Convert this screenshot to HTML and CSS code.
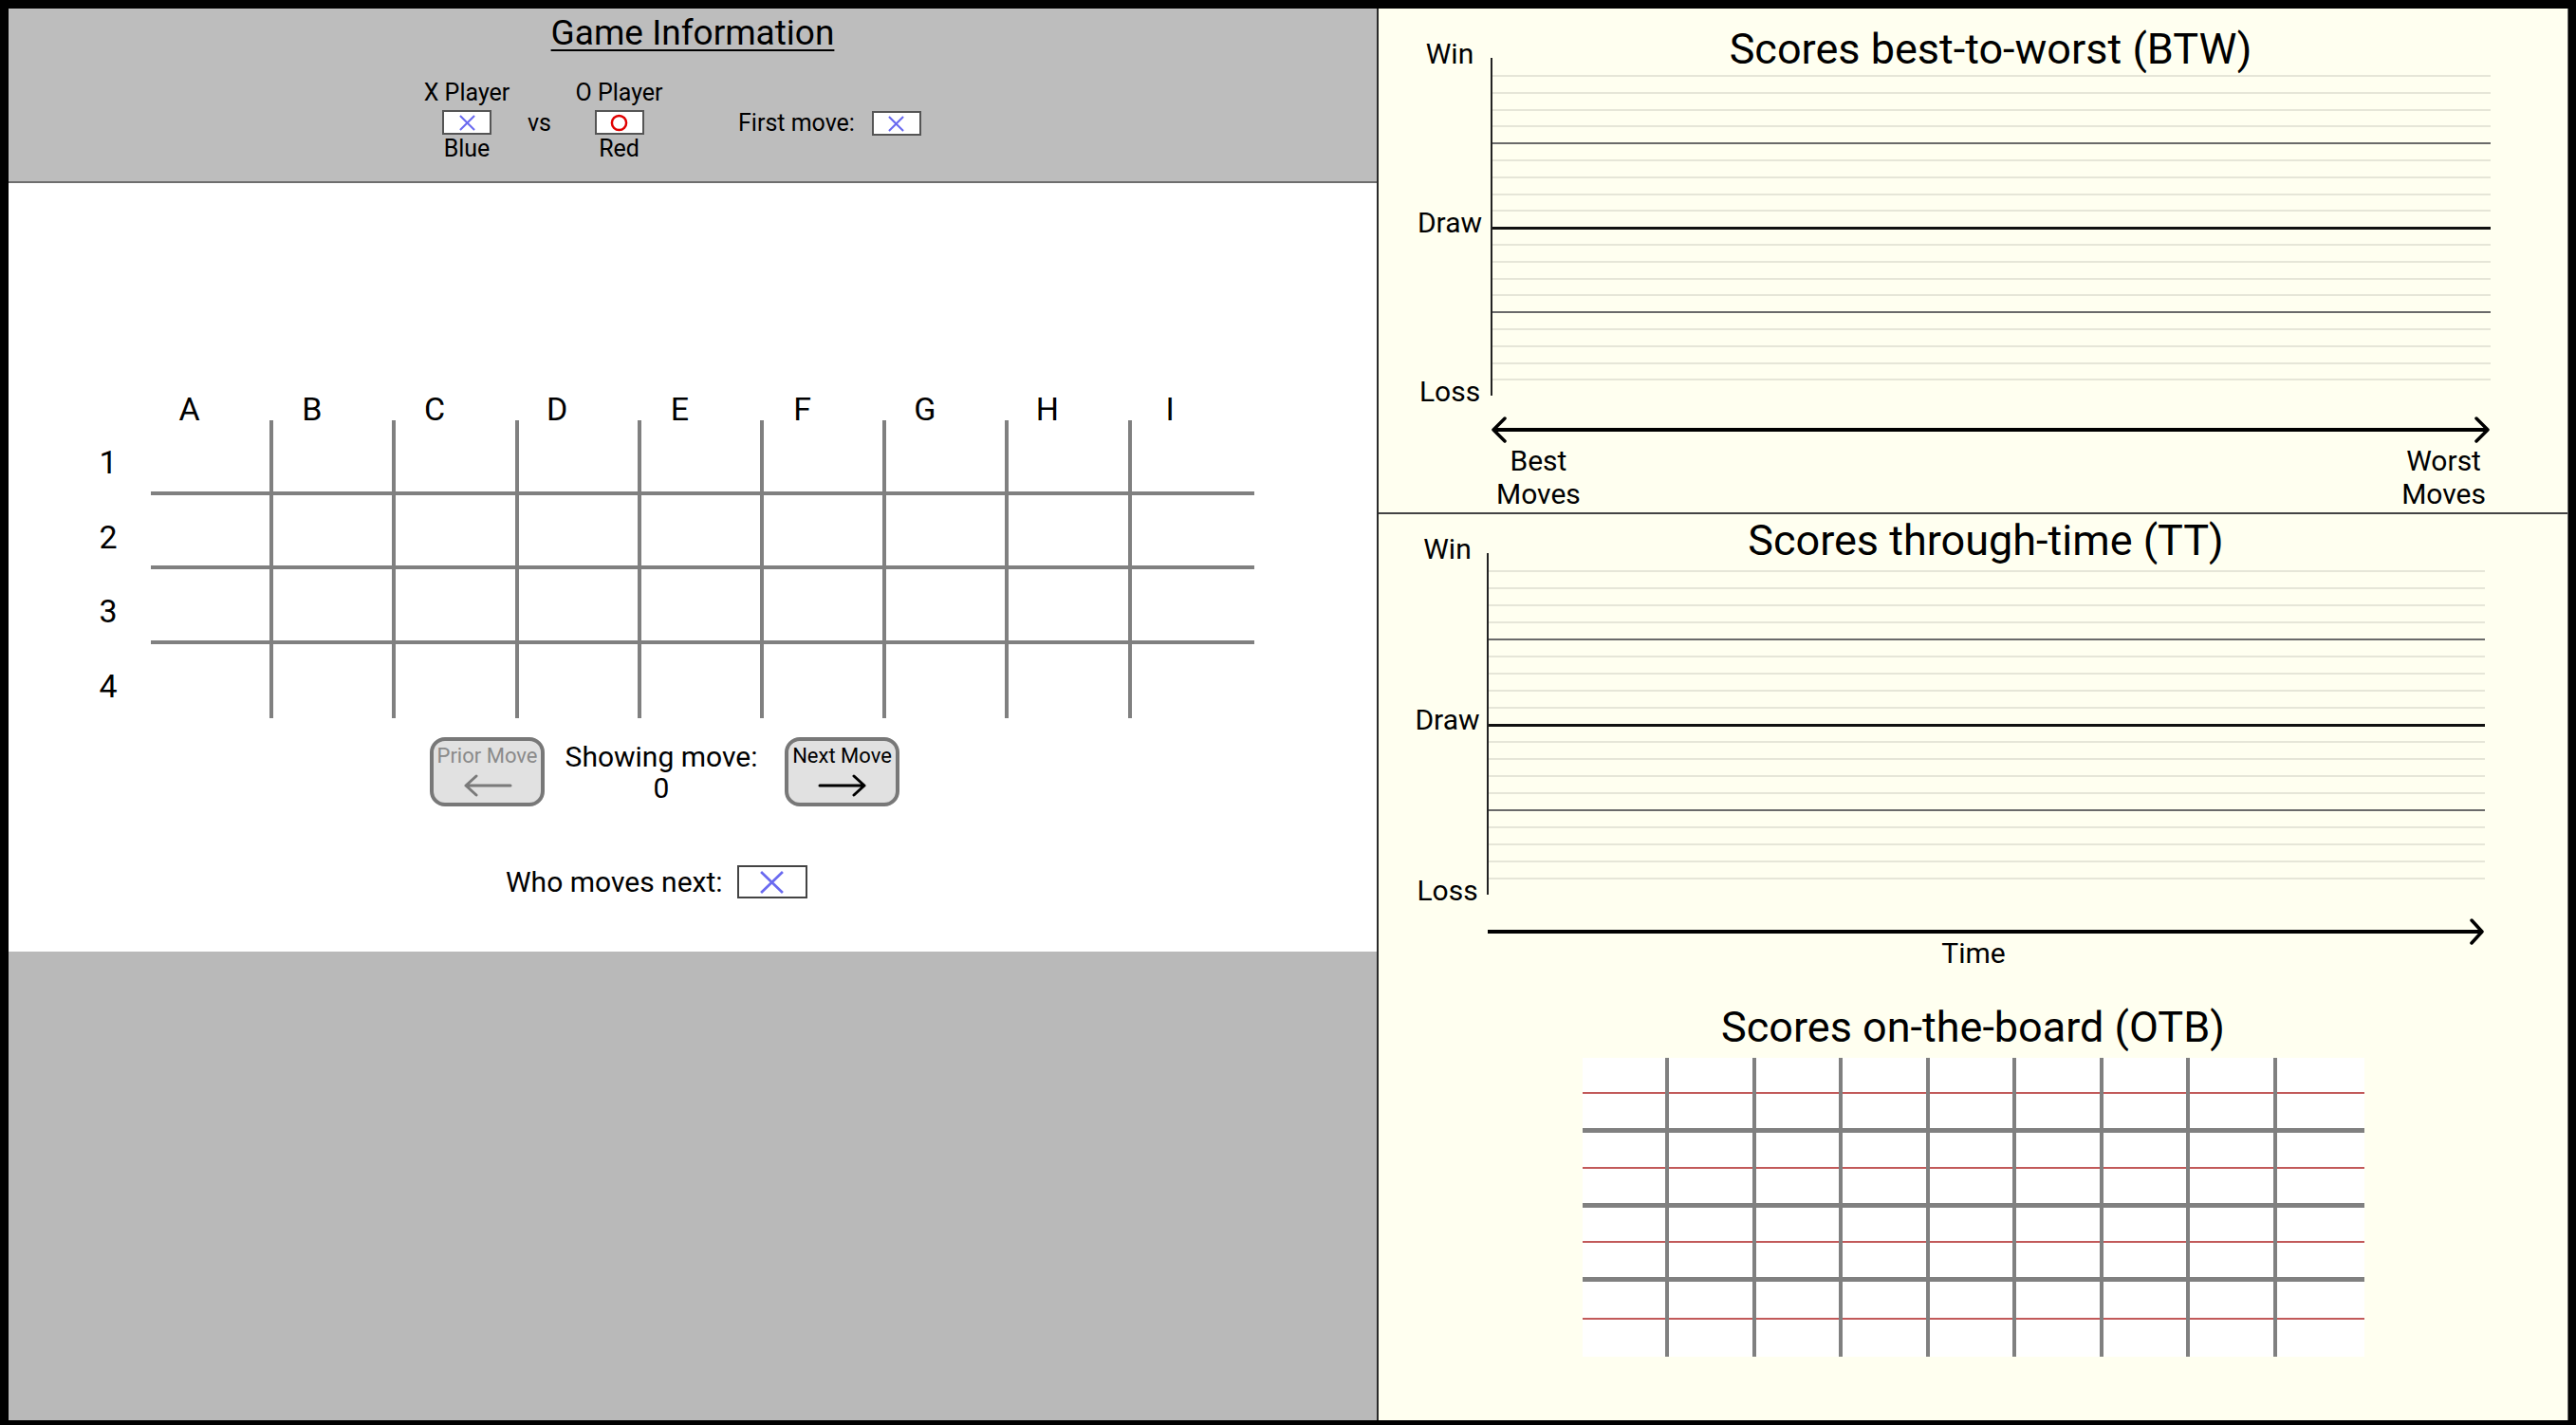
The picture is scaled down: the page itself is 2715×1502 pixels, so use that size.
FILE: index.html
```html
<!DOCTYPE html>
<html lang="en">
<head>
<meta charset="utf-8">
<title>Game Information</title>
<link rel="stylesheet" href="styles.css">
</head>
<body>
<div class="app">
  <section class="left">
    <header class="info">
      <h1 class="info-title">Game Information</h1>
      <div class="players">
        <div class="player player-x">
          <span>X Player</span>
          <span class="mark-box"><svg class="xmark" viewBox="0 0 20 18"><path d="M2 1 L18 17 M18 1 L2 17"/></svg></span>
          <span>Blue</span>
        </div>
        <span class="vs">vs</span>
        <div class="player player-o">
          <span>O Player</span>
          <span class="mark-box"><svg class="omark" viewBox="0 0 20 20"><circle cx="10" cy="10" r="8"/></svg></span>
          <span>Red</span>
        </div>
        <div class="first-move">
          <span>First move:</span>
          <span class="mark-box"><svg class="xmark" viewBox="0 0 20 18"><path d="M2 1 L18 17 M18 1 L2 17"/></svg></span>
        </div>
      </div>
    </header>

    <div class="board-area">
      <div class="board">
        <div></div>
        <div class="col-label">A</div><div class="col-label">B</div><div class="col-label">C</div>
        <div class="col-label">D</div><div class="col-label">E</div><div class="col-label">F</div>
        <div class="col-label">G</div><div class="col-label">H</div><div class="col-label">I</div>

        <div class="row-label">1</div>
        <div class="cell"></div><div class="cell"></div><div class="cell"></div><div class="cell"></div><div class="cell"></div><div class="cell"></div><div class="cell"></div><div class="cell"></div><div class="cell"></div>
        <div class="row-label">2</div>
        <div class="cell"></div><div class="cell"></div><div class="cell"></div><div class="cell"></div><div class="cell"></div><div class="cell"></div><div class="cell"></div><div class="cell"></div><div class="cell"></div>
        <div class="row-label">3</div>
        <div class="cell"></div><div class="cell"></div><div class="cell"></div><div class="cell"></div><div class="cell"></div><div class="cell"></div><div class="cell"></div><div class="cell"></div><div class="cell"></div>
        <div class="row-label">4</div>
        <div class="cell"></div><div class="cell"></div><div class="cell"></div><div class="cell"></div><div class="cell"></div><div class="cell"></div><div class="cell"></div><div class="cell"></div><div class="cell"></div>
      </div>

      <div class="controls">
        <button class="btn btn-prior" type="button">
          <span>Prior Move</span>
          <svg class="btn-arrow" viewBox="0 0 52 24"><path d="M50 12 H3 M14 2 L3 12 L14 22"/></svg>
        </button>
        <div class="showing">
          <div>Showing move:</div>
          <div>0</div>
        </div>
        <button class="btn btn-next" type="button">
          <span>Next Move</span>
          <svg class="btn-arrow" viewBox="0 0 52 24"><path d="M2 12 H49 M38 2 L49 12 L38 22"/></svg>
        </button>
      </div>

      <div class="who">
        <span>Who moves next:</span>
        <span class="who-box"><svg class="xmark xmark-lg" viewBox="0 0 26 23"><path d="M2 1 L24 22 M24 1 L2 22"/></svg></span>
      </div>
    </div>

    <div class="left-fill"></div>
  </section>

  <section class="right">
    <div class="chart chart-btw">
      <h2 class="chart-title">Scores best-to-worst (BTW)</h2>
      <div class="ylabels"><span>Win</span><span>Draw</span><span>Loss</span></div>
      <div class="plot">
        <div class="band"></div><div class="band"></div><div class="band"></div><div class="band"></div><div class="band"></div>
        <div class="band"></div><div class="band"></div><div class="band"></div><div class="band"></div><div class="band"></div>
        <div class="band"></div><div class="band"></div><div class="band"></div><div class="band"></div><div class="band"></div>
        <div class="band"></div><div class="band"></div><div class="band"></div><div class="band"></div><div class="band"></div>
      </div>
      <svg class="xaxis" viewBox="0 0 1054 30"><path d="M3 15 H1051"/><path class="head" d="M15 3 L3 15 L15 27 M1039 3 L1051 15 L1039 27"/></svg>
      <div class="xcaptions">
        <div>Best<br>Moves</div>
        <div>Worst<br>Moves</div>
      </div>
    </div>

    <div class="chart chart-tt">
      <h2 class="chart-title">Scores through-time (TT)</h2>
      <div class="ylabels"><span>Win</span><span>Draw</span><span>Loss</span></div>
      <div class="plot">
        <div class="band"></div><div class="band"></div><div class="band"></div><div class="band"></div><div class="band"></div>
        <div class="band"></div><div class="band"></div><div class="band"></div><div class="band"></div><div class="band"></div>
        <div class="band"></div><div class="band"></div><div class="band"></div><div class="band"></div><div class="band"></div>
        <div class="band"></div><div class="band"></div><div class="band"></div><div class="band"></div><div class="band"></div>
      </div>
      <svg class="xaxis" viewBox="0 0 1052 28"><path d="M1 14 H1049"/><path class="head" d="M1038 2 L1049 14 L1038 26"/></svg>
      <div class="xtime">Time</div>
    </div>

    <div class="otb">
      <h2 class="chart-title otb-title">Scores on-the-board (OTB)</h2>
      <div class="otb-board">
        <div class="ocell"></div><div class="ocell"></div><div class="ocell"></div><div class="ocell"></div><div class="ocell"></div><div class="ocell"></div><div class="ocell"></div><div class="ocell"></div><div class="ocell"></div>
        <div class="ocell"></div><div class="ocell"></div><div class="ocell"></div><div class="ocell"></div><div class="ocell"></div><div class="ocell"></div><div class="ocell"></div><div class="ocell"></div><div class="ocell"></div>
        <div class="ocell"></div><div class="ocell"></div><div class="ocell"></div><div class="ocell"></div><div class="ocell"></div><div class="ocell"></div><div class="ocell"></div><div class="ocell"></div><div class="ocell"></div>
        <div class="ocell"></div><div class="ocell"></div><div class="ocell"></div><div class="ocell"></div><div class="ocell"></div><div class="ocell"></div><div class="ocell"></div><div class="ocell"></div><div class="ocell"></div>
      </div>
    </div>
  </section>
</div>
</body>
</html>
```

FILE: styles.css
```css
* { box-sizing: border-box; }

html, body {
  margin: 0;
  background: #000;
}

body {
  font-family: Roboto, "Liberation Sans", sans-serif;
  color: #000;
}

.app {
  display: flex;
  width: 2698px;
  height: 1488px;
  margin: 9px 8px 5px 9px;
}

/* ---------- left panel ---------- */
.left {
  width: 1444px;
  display: flex;
  flex-direction: column;
  border-right: 2px solid #2a2a2a;
}

.info {
  height: 184px;
  background: #bdbdbd;
  border-bottom: 2px solid #6e6e6e;
}

.info-title {
  margin: 0;
  padding-top: 5px;
  font-size: 37px;
  line-height: 42px;
  font-weight: 400;
  text-align: center;
  text-decoration: underline;
  text-decoration-thickness: 2px;
  text-underline-offset: 5px;
}

.players {
  display: flex;
  align-items: flex-start;
  margin-top: 27px;
  padding-left: 438px;
  font-size: 25px;
  line-height: 30px;
}

.player {
  display: flex;
  flex-direction: column;
  align-items: center;
  white-space: nowrap;
}
.player-x { width: 90px; }
.player-o { width: 85px; margin-left: 29px; }

.mark-box {
  width: 52px;
  height: 26px;
  margin: 3px 0 0;
  background: #fff;
  border: 2px solid #555;
  display: flex;
  align-items: center;
  justify-content: center;
}

.xmark { width: 19px; height: 17px; }
.xmark path { stroke: #6a6af0; stroke-width: 2.2; fill: none; }
.xmark-lg { width: 27px; height: 24px; }
.xmark-lg path { stroke-width: 2.6; }

.omark { width: 19px; height: 19px; }
.omark circle { stroke: #e00000; stroke-width: 2.6; fill: none; }

.vs {
  margin: 32px 0 0 19px;
}

.first-move {
  display: flex;
  align-items: center;
  margin: 32px 0 0 83px;
  white-space: nowrap;
}
.first-move .mark-box { margin: 0 0 0 18px; }

/* board */
.board-area {
  height: 810px;
  background: #fff;
  padding-top: 222px;
}

.board {
  display: grid;
  grid-template-columns: 86px repeat(9, 129.2px);
  grid-template-rows: 28px repeat(4, 78.5px);
  margin-left: 64px;
}

.col-label {
  font-size: 34px;
  line-height: 32px;
  height: 32px;
  text-align: center;
  padding-right: 48px;
}

.row-label {
  font-size: 34px;
  line-height: 40px;
  align-self: center;
  text-align: center;
  padding-top: 10px;
  padding-right: 4px;
}

.cell {
  border-right: 4px solid #808080;
  border-bottom: 4px solid #808080;
}
.board .cell:nth-child(10n) { border-right: none; }
.board .cell:nth-child(n+42) { border-bottom: none; }

.controls {
  display: flex;
  align-items: center;
  margin: 20px 0 0 444px;
}

.btn {
  width: 121px;
  height: 73px;
  border: 4px solid #787878;
  border-radius: 16px;
  background: #e1e1e1;
  display: flex;
  flex-direction: column;
  align-items: center;
  padding: 3px 0 0;
  font-family: Roboto, "Liberation Sans", sans-serif;
  font-size: 22px;
  line-height: 26px;
  white-space: nowrap;
  cursor: pointer;
}
.btn-prior { color: #8a8a8a; }
.btn-next { color: #000; margin-left: 29px; }

.btn-arrow {
  width: 52px;
  height: 24px;
  margin-top: 6px;
}
.btn-arrow path { fill: none; stroke-width: 3; stroke-linecap: round; stroke-linejoin: round; }
.btn-prior .btn-arrow path { stroke: #7a7a7a; }
.btn-next .btn-arrow path { stroke: #000; }

.showing {
  width: 202px;
  margin-left: 22px;
  text-align: center;
  font-size: 30px;
  line-height: 33px;
  white-space: nowrap;
  display: flex;
  flex-direction: column;
  align-items: center;
}

.who {
  display: flex;
  align-items: center;
  margin: 62px 0 0 524px;
  font-size: 30px;
  line-height: 35px;
  white-space: nowrap;
}

.who-box {
  width: 74px;
  height: 35px;
  margin-left: 15px;
  background: #fff;
  border: 2px solid #444;
  display: flex;
  align-items: center;
  justify-content: center;
}

.left-fill {
  flex: 1;
  background: #b9b9b9;
}

/* ---------- right panel ---------- */
.right {
  flex: 1;
  background: #fffff0;
  border-right: 1px solid #666;
  display: flex;
  flex-direction: column;
}

.chart {
  display: grid;
  grid-template-columns: 118px 1054px;
}

.chart-title {
  margin: 0;
  font-size: 45px;
  line-height: 52px;
  font-weight: 400;
  text-align: center;
  white-space: nowrap;
}

.chart .chart-title { grid-column: 2; }

.ylabels {
  grid-column: 1;
  display: flex;
  flex-direction: column;
  justify-content: space-between;
  padding-left: 32px;
  font-size: 30px;
  text-align: center;
}
.ylabels span {
  display: block;
  height: 0;
  line-height: 0;
}

.plot {
  grid-column: 2;
  display: flex;
  flex-direction: column;
  border-left: 2px solid #222;
}

.band {
  flex: none;
  height: 5%;
}
.band:nth-child(n+2) { border-top: 2px solid #e6e6d8; }
.band:nth-child(6), .band:nth-child(16) { border-top: 2px solid #6a6a6a; }
.band:nth-child(11) { border-top: 3px solid #111; }

.xaxis { grid-column: 2; display: block; }
.xaxis path { fill: none; stroke: #000; stroke-width: 4; }
.xaxis path.head { stroke-width: 3.5; stroke-linecap: round; stroke-linejoin: round; }

/* BTW */
.chart-btw {
  height: 533px;
  border-bottom: 2px solid #444;
}
.chart-btw .chart-title { margin-top: 17px; }
.chart-btw .plot { height: 356px; margin-top: -19px; }
.chart-btw .ylabels { height: 356px; margin-top: -23px; }
.chart-btw .xaxis { width: 1054px; height: 30px; margin-top: 18px; }

.xcaptions {
  grid-column: 2;
  display: flex;
  justify-content: space-between;
  margin-top: -2px;
  padding: 0 5px 0 6px;
  font-size: 30px;
  line-height: 35px;
  text-align: center;
}

/* TT */
.chart-tt {
  grid-template-columns: 114px 1052px;
}
.chart-tt .chart-title { margin-top: 2px; }
.chart-tt .plot { height: 360px; margin-top: -13px; }
.chart-tt .ylabels { height: 360px; margin-top: -17px; padding-left: 31px; }
.chart-tt .xaxis { width: 1052px; height: 28px; margin-top: 25px; }

.xtime {
  grid-column: 2;
  margin-top: -6px;
  padding-right: 26px;
  font-size: 30px;
  line-height: 30px;
  text-align: center;
}

/* OTB */
.otb-title { margin-top: 37px; }

.otb-board {
  width: 824px;
  height: 315px;
  margin: 6px auto 0;
  background: #fff;
  display: grid;
  grid-template-columns: repeat(9, 1fr);
  grid-template-rows: repeat(4, 1fr);
}

.ocell {
  border-right: 4px solid #808080;
  border-bottom: 5px solid #808080;
  background: linear-gradient(to bottom,
    transparent calc(50% - 1px),
    #c25a5a calc(50% - 1px),
    #c25a5a calc(50% + 1px),
    transparent calc(50% + 1px));
  background-clip: content-box;
}
.ocell:nth-child(9n) { border-right: none; }
.ocell:nth-child(n+28) { border-bottom: none; }
```
